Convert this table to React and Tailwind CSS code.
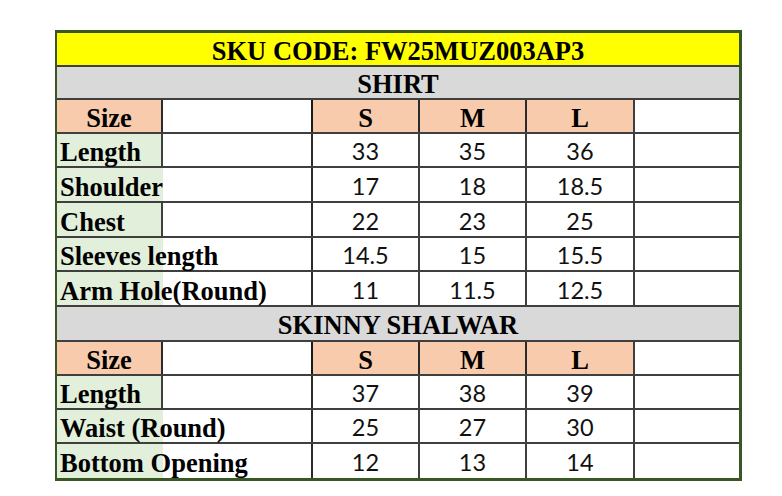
import React from "react";

const serif = { fontFamily: '"Liberation Serif", "Times New Roman", serif' };
const sans = { fontFamily: 'Lato, Carlito, Calibri, "Open Sans", sans-serif' };

function HeaderRow({ text, bg, h }) {
  return (
    <div className={`flex items-center justify-center border-b-2 border-[#3f3f3f] ${bg} ${h}`}>
      <span className="text-[26.5px] font-bold leading-none pt-[4px] text-black" style={serif}>
        {text}
      </span>
    </div>
  );
}

function SizeRow({ h }) {
  return (
    <div className={`flex border-b-2 border-[#3f3f3f] ${h}`}>
      <div className="w-[106px] bg-[#f8cbad] border-r-2 border-[#2b2b2b] flex items-center justify-center">
        <span className="text-[26.5px] font-bold leading-none pt-[5px]" style={serif}>Size</span>
      </div>
      <div className="w-[150px] border-r-2 border-[#1a1a1a]"></div>
      <div className="w-[107px] bg-[#f8cbad] border-r-2 border-[#2b2b2b] flex items-center justify-center">
        <span className="text-[26.5px] font-bold leading-none pt-[5px]" style={serif}>S</span>
      </div>
      <div className="w-[107px] bg-[#f8cbad] border-r-2 border-[#2b2b2b] flex items-center justify-center">
        <span className="text-[26.5px] font-bold leading-none pt-[5px]" style={serif}>M</span>
      </div>
      <div className="w-[108px] bg-[#f8cbad] border-r-2 border-[#3f3f3f] flex items-center justify-center">
        <span className="text-[26.5px] font-bold leading-none pt-[5px]" style={serif}>L</span>
      </div>
      <div className="w-[104px]"></div>
    </div>
  );
}

function DataRow({ label, line, vals, h, last }) {
  return (
    <div className={`flex ${last ? "" : "border-b-2 border-[#3f3f3f]"} ${h}`}>
      <div
        className={`w-[106px] bg-[#e2efda] flex items-center relative z-10 ${
          line ? "border-r-2 border-[#3f3f3f]" : "border-r-2 border-transparent"
        }`}
      >
        <span className="text-[26.5px] font-bold leading-none pt-[5px] pl-[3px] whitespace-nowrap text-black" style={serif}>
          {label}
        </span>
      </div>
      <div className="w-[150px] border-r-2 border-[#2b2b2b]"></div>
      {vals.map((v, i) => (
        <div
          key={i}
          className={`${i === 2 ? "w-[108px]" : "w-[107px]"} border-r-2 border-[#3f3f3f] flex items-center justify-center`}
        >
          <span className="text-[23.5px] leading-none pt-[4px] text-[#111]" style={sans}>
            {v}
          </span>
        </div>
      ))}
      <div className="w-[104px]"></div>
    </div>
  );
}

export default function App() {
  return (
    <div className="w-[782px] h-[496px] bg-white pt-[30px] pl-[55px]">
      <div className="w-[687px] border-solid border-[#385723] border-t-[3px] border-l-[2px] border-r-[3px] border-b-[3px] bg-white">
        <HeaderRow text="SKU CODE: FW25MUZ003AP3" bg="bg-[#ffff00]" h="h-[34px]" />
        <HeaderRow text="SHIRT" bg="bg-[#d9d9d9]" h="h-[33px]" />
        <SizeRow h="h-[34px]" />
        <DataRow label="Length" line vals={["33", "35", "36"]} h="h-[34px]" />
        <DataRow label="Shoulder" vals={["17", "18", "18.5"]} h="h-[35px]" />
        <DataRow label="Chest" line vals={["22", "23", "25"]} h="h-[35px]" />
        <DataRow label="Sleeves length" vals={["14.5", "15", "15.5"]} h="h-[34px]" />
        <DataRow label="Arm Hole(Round)" vals={["11", "11.5", "12.5"]} h="h-[35px]" />
        <HeaderRow text="SKINNY SHALWAR" bg="bg-[#d9d9d9]" h="h-[35px]" />
        <SizeRow h="h-[34px]" />
        <DataRow label="Length" line vals={["37", "38", "39"]} h="h-[34px]" />
        <DataRow label="Waist (Round)" vals={["25", "27", "30"]} h="h-[34px]" />
        <DataRow label="Bottom Opening" vals={["12", "13", "14"]} h="h-[34px]" last />
      </div>
    </div>
  );
}
